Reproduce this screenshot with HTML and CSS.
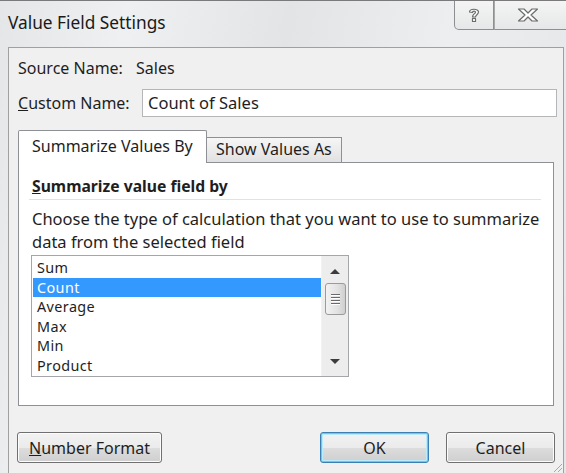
FILE: index.html
```html
<!DOCTYPE html>
<html lang="en">
<head>
  <meta charset="UTF-8">
  <title>Value Field Settings</title>
  <link rel="stylesheet" href="styles.css">
</head>
<body>

  <div class="window">
    <div class="titlebar">
      <div class="title">Value Field Settings</div>
      <div class="caption-buttons">
        <div class="cap-btn help">
          <svg width="12" height="16" viewBox="0 0 12 16">
            <path d="M1.5 5 C1.5 1.5 10.5 1.2 10.5 5 C10.5 7.5 7.5 7.8 7.5 10 L4.5 10 C4.5 7 7.5 6.6 7.5 5.2 C7.5 3.8 4.5 3.8 4.5 5.5 Z M4.5 11.5 L7.5 11.5 L7.5 14.5 L4.5 14.5 Z" fill="#fff" stroke="#6b6b6b" stroke-width="1.2" stroke-linejoin="round"/>
          </svg>
        </div>
        <div class="cap-btn close">
          <svg width="22" height="14" viewBox="0 0 22 14">
            <path d="M1.5 1 L7 1 L11 5 L15 1 L20.5 1 L14 7 L20.5 13 L15 13 L11 9 L7 13 L1.5 13 L8 7 Z" fill="#fff" stroke="#6b6b6b" stroke-width="1.2" stroke-linejoin="round"/>
          </svg>
        </div>
      </div>
    </div>

    <div class="client">
      <div class="source-row">
        <span class="label">Source Name:</span>
        <span>Sales</span>
      </div>

      <div class="custom-row">
        <label class="label-wide"><u>C</u>ustom Name:</label>
        <div class="text-input">Count of Sales</div>
      </div>

      <div class="tabs">
        <div class="tab active">Summarize Values By</div>
        <div class="tab">Show Values As</div>
      </div>

      <div class="tab-panel">
        <div class="group-title"><u>S</u>ummarize value field by</div>
        <p class="desc">Choose the type of calculation that you want to use to summarize data from the selected field</p>

        <div class="listbox">
          <ul class="items">
            <li>Sum</li>
            <li class="selected">Count</li>
            <li>Average</li>
            <li>Max</li>
            <li>Min</li>
            <li>Product</li>
          </ul>
          <div class="scrollbar">
            <div class="arrow up"></div>
            <div class="thumb">
              <span></span><span></span><span></span><span></span>
            </div>
            <div class="track"></div>
            <div class="arrow down"></div>
          </div>
        </div>
      </div>

      <div class="button-row">
        <button class="btn number-format"><u>N</u>umber Format</button>
        <div class="spacer"></div>
        <button class="btn default">OK</button>
        <button class="btn">Cancel</button>
      </div>

      <svg class="grip" width="12" height="12" viewBox="0 0 12 12">
        <path d="M11 3 L3 11 M11 7 L7 11" stroke="#a8a8a8" stroke-width="1"/>
      </svg>
    </div>
  </div>

</body>
</html>
```

FILE: styles.css
```css
* {
  box-sizing: border-box;
}

body {
  margin: 0;
  font-family: 'Noto Sans', 'Open Sans', sans-serif;
  font-size: 16px;
  color: #1e1e1e;
}

.window {
  width: 566px;
  height: 473px;
  display: flex;
  flex-direction: column;
  padding-left: 8px;
  border-top: 1px solid #7a7a7a;
  background: linear-gradient(100deg, #e4e6e8 0%, #eef0f1 20%, #e2e4e6 45%, #eceeef 70%, #e3e5e7 100%);
  overflow: hidden;
}

/* title bar */
.titlebar {
  height: 46px;
  display: flex;
  justify-content: space-between;
  align-items: flex-start;
}

.title {
  margin-top: 10px;
  font-size: 17.3px;
  color: #1a1a1a;
}

.caption-buttons {
  display: flex;
  margin-top: -1px;
  margin-right: -2px;
}

.cap-btn {
  height: 30px;
  display: flex;
  align-items: center;
  justify-content: center;
  border: 1px solid #8e8f90;
  border-top: none;
  background: linear-gradient(#f5f5f5, #e6e7e8);
}

.help {
  width: 40px;
  border-radius: 0 0 0 5px;
}

.close {
  width: 74px;
  border-left: 1px solid #a9a9a9;
  padding-right: 6px;
}

/* client area */
.client {
  position: relative;
  flex: 1;
  margin-right: 2px;
  padding: 10px 9px 0 9px;
  background: #f0f0f0;
  border: 1px solid #a0a0a0;
  border-bottom: none;
}

.source-row {
  display: flex;
  height: 20px;
  line-height: 20px;
}

.source-row .label {
  width: 118px;
}

.custom-row {
  display: flex;
  align-items: center;
  margin-top: 11px;
  margin-right: -3px;
}

.label-wide {
  width: 124px;
}

.text-input {
  flex: 1;
  height: 28px;
  line-height: 26px;
  padding-left: 5px;
  font-size: 16.5px;
  background: #fff;
  border: 1px solid #b4b6ba;
}

/* tabs */
.tabs {
  display: flex;
  align-items: flex-end;
  height: 32px;
  margin-top: 13px;
}

.tab {
  height: 25px;
  line-height: 23px;
  padding: 0 9px;
  border: 1px solid #8e9096;
  border-bottom: none;
  border-left: none;
  background: linear-gradient(#f6f6f6, #e1e1e1);
}

.tab.active {
  position: relative;
  z-index: 1;
  width: 189px;
  height: 33px;
  margin-bottom: -1px;
  line-height: 31px;
  padding-left: 13px;
  border-left: 1px solid #8e9096;
  border-radius: 2px 2px 0 0;
  background: #fff;
}

.tab-panel {
  height: 244px;
  padding: 12px 12px 0 10px;
  background: #fff;
  border: 1px solid #8e9096;
}

.group-title {
  height: 25px;
  line-height: 22px;
  padding-left: 3px;
  font-size: 15.7px;
  font-weight: bold;
  border-bottom: 1px solid #dfe3e8;
}

.desc {
  margin: 7px 0 0 3px;
  line-height: 23px;
  font-size: 16.5px;
}

/* list box */
.listbox {
  display: flex;
  width: 318px;
  height: 122px;
  margin: 2px 0 0 2px;
  border: 1px solid #a4a6aa;
}

.items {
  flex: 1;
  margin: 0;
  padding: 2px 0 0 1px;
  list-style: none;
  font-size: 14.4px;
  letter-spacing: 0.4px;
}

.items li {
  height: 19.6px;
  line-height: 19.6px;
  padding-left: 4px;
}

.items li.selected {
  background: #3399ff;
  color: #fff;
}

.scrollbar {
  width: 27px;
  display: flex;
  flex-direction: column;
  align-items: center;
  background: #ededed;
  border-left: 1px solid #f2f2f2;
}

.arrow {
  width: 0;
  height: 0;
  border-left: 5px solid transparent;
  border-right: 5px solid transparent;
}

.arrow.up {
  margin-top: 13px;
  border-bottom: 5px solid #3c3c3c;
}

.arrow.down {
  margin-bottom: 12px;
  border-top: 5px solid #3c3c3c;
}

.thumb {
  width: 21px;
  height: 32px;
  margin-top: 9px;
  display: flex;
  flex-direction: column;
  align-items: center;
  justify-content: center;
  gap: 2px;
  border: 1px solid #9a9a9a;
  border-radius: 3px;
  background: linear-gradient(90deg, #f2f2f2, #e2e2e2 60%, #cfcfcf);
}

.thumb span {
  width: 9px;
  height: 1px;
  background: #6a6a6a;
  box-shadow: 0 1px 0 #fff;
}

.track {
  flex: 1;
}

/* buttons */
.button-row {
  display: flex;
  gap: 17px;
  margin-top: 26px;
  margin-left: -1px;
  margin-right: -1px;
}

.spacer {
  flex: 1;
}

.btn {
  height: 31px;
  width: 109px;
  font-family: inherit;
  font-size: 16px;
  color: #1e1e1e;
  border: 1px solid #707070;
  border-radius: 3px;
  background: linear-gradient(#f2f2f2 0%, #ebebeb 50%, #dddddd 51%, #cfcfcf 100%);
  box-shadow: inset 0 0 0 1px #fcfcfc;
  padding: 0;
}

.btn.number-format {
  width: 145px;
}

.btn.default {
  border-color: #3c7fb1;
  box-shadow: inset 0 0 0 1px #48d8fb, inset 0 0 0 2px #b9ecfc;
}

.grip {
  position: absolute;
  right: 0;
  bottom: 0;
}
```
